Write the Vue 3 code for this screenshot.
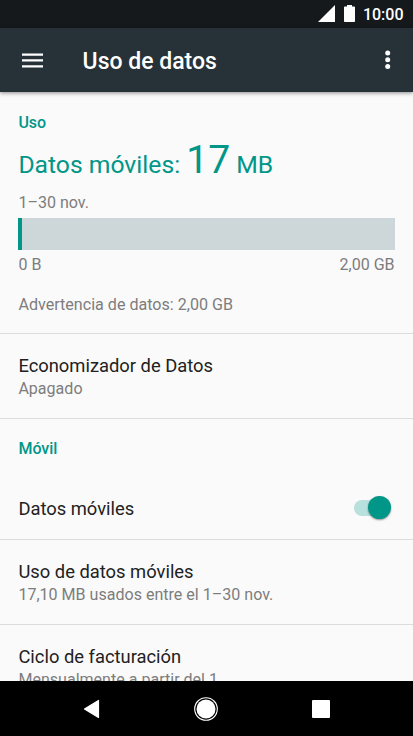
<script setup>
import { ref } from 'vue'

const mobileData = ref(true)
const usage = { used: 17.1, limit: 2048 }
const fill = `${(usage.used / usage.limit) * 100}%`
</script>

<template>
  <div class="screen">
    <div class="status">
      <svg class="signal" viewBox="0 0 17 17"><path d="M0 17 17 0v17z" /></svg>
      <svg class="battery" viewBox="0 0 11 17"><path d="M3 0h5v1.500h2.200q.8 0 .8.8v13.900q0 .8-.8.8H.8q-.8 0-.8-.8V2.300q0-.8.8-.8H3z" /></svg>
      <span class="clock">10:00</span>
    </div>
    <header class="appbar">
      <svg class="menu" viewBox="0 0 21 15"><path d="M0 .4h21v2.300H0zM0 6.300h21v2.300H0zM0 12.200h21v2.300H0z" /></svg>
      <h1>Uso de datos</h1>
      <svg class="more" viewBox="0 0 6 20"><circle cx="2.700" cy="3" r="2.500" /><circle cx="2.700" cy="9.800" r="2.500" /><circle cx="2.700" cy="16.600" r="2.500" /></svg>
    </header>

    <main>
      <section class="summary">
        <h2>Uso</h2>
        <p class="total"><span class="label">Datos móviles:</span> <span class="amount">17</span> <span class="unit">MB</span></p>
        <p class="sub period">1–30 nov.</p>
        <div class="bar"><div class="fill" :style="{ width: fill }"></div></div>
        <div class="sub range"><span>0 B</span><span>2,00 GB</span></div>
        <p class="sub warning">Advertencia de datos: 2,00 GB</p>
      </section>
      <section class="row saver">
        <p class="name">Economizador de Datos</p>
        <p class="sub">Apagado</p>
      </section>
      <h2 class="category">Móvil</h2>
      <section class="row toggle">
        <p class="name">Datos móviles</p>
        <button class="switch" :class="{ on: mobileData }" aria-label="Datos móviles" @click="mobileData = !mobileData"><span class="thumb"></span></button>
      </section>
      <section class="row">
        <p class="name">Uso de datos móviles</p>
        <p class="sub">17,10 MB usados entre el 1–30 nov.</p>
      </section>
      <section class="row last">
        <p class="name">Ciclo de facturación</p>
        <p class="sub">Mensualmente a partir del 1</p>
      </section>
    </main>

    <nav>
      <svg class="back" viewBox="0 0 17 20"><path d="M15.500 1.500v17L1.500 10z" /></svg>
      <svg class="home" viewBox="0 0 24 24"><circle class="ring" cx="12" cy="12" r="11.300" /><circle cx="12" cy="12" r="9.500" /></svg>
      <svg class="recent" viewBox="0 0 18 18"><rect width="18" height="18" rx="1" /></svg>
    </nav>
  </div>
</template>

<style>
body { margin: 0; background: #fafafa; }
</style>

<style scoped>
.screen { width: 413px; height: 736px; display: flex; flex-direction: column; overflow: hidden; background: #fafafa; font-family: Roboto, sans-serif; color: #212121; }
h1, h2, p { margin: 0; }
svg { display: block; flex: none; fill: #fff; }
.status { box-sizing: border-box; height: 28px; flex: none; display: flex; justify-content: flex-end; padding: 5px 9.500px 0 0; background: #15191c; color: #fff; }
.signal { width: 17px; height: 17px; margin-right: 9px; }
.battery { width: 11px; height: 17px; margin-right: 8px; }
.clock { font-size: 16px; font-weight: 500; line-height: 20px; }
.appbar { box-sizing: border-box; height: 64px; flex: none; display: flex; align-items: center; padding: 0 22px; background: #263238; color: #fff; box-shadow: 0 1px 4px rgba(0, 0, 0, .45); z-index: 1; }
.menu { width: 21px; height: 15px; }
h1 { margin: 4px auto 0 39.600px; font-size: 23px; line-height: 28px; font-weight: 500; }
.more { width: 6px; height: 20px; }
main { flex: 1; min-height: 0; overflow: hidden; }
h2 { font-size: 16px; line-height: 20px; font-weight: 500; color: #009688; }
.name { font-size: 18.36px; line-height: 22px; }
.sub { font-size: 16.06px; line-height: 20px; color: #7d7d7d; }
.summary { box-sizing: border-box; height: 242px; padding: 21px 18.400px 0; border-bottom: 1px solid #dcdcdc; }
.total { height: 46px; margin-top: 4px; line-height: 46px; font-size: 24.700px; color: #009688; white-space: nowrap; }
.amount { font-size: 39px; }
.period { margin-top: 10px; }
.bar { height: 32px; margin-top: 5px; background: #cdd7da; }
.fill { height: 100%; min-width: 3px; background: #009688; }
.range { display: flex; justify-content: space-between; margin-top: 5px; }
.warning { margin-top: 20px; font-size: 16.1px; }
.row { box-sizing: border-box; height: 85px; padding: 21px 18.400px 0; border-bottom: 1px solid #dcdcdc; }
.row .sub { margin-top: 2px; }
.category { padding: 20px 18.400px 0; height: 40px; }
.toggle { height: 61px; padding: 19px 22.500px 0 18.400px; display: flex; justify-content: space-between; align-items: flex-start; }
.toggle, .category { box-sizing: border-box; }
.category { height: 60px; }
.switch { position: relative; width: 37px; height: 16px; padding: 0; border: 0; border-radius: 8px; background: #bdbdbd; margin-top: 2px; }
.thumb { position: absolute; top: -4px; left: 0; width: 23px; height: 23px; border-radius: 50%; background: #fafafa; box-shadow: 0 1px 2px rgba(0, 0, 0, .4); }
.switch.on { background: #b8e0dc; }
.switch.on .thumb { left: 14px; background: #009688; }
.last { border-bottom: 0; }
nav { box-sizing: border-box; height: 55px; flex: none; display: flex; align-items: center; padding-left: 83px; background: #000; }
.back { width: 17px; height: 20px; }
.back path { stroke: #fff; stroke-width: 1.200; stroke-linejoin: round; }
.home { width: 24px; height: 24px; margin-left: 94.400px; }
.ring { fill: none; stroke: #fff; stroke-width: 1.100; }
.recent { width: 18px; height: 18px; margin-left: 93.600px; }
</style>
